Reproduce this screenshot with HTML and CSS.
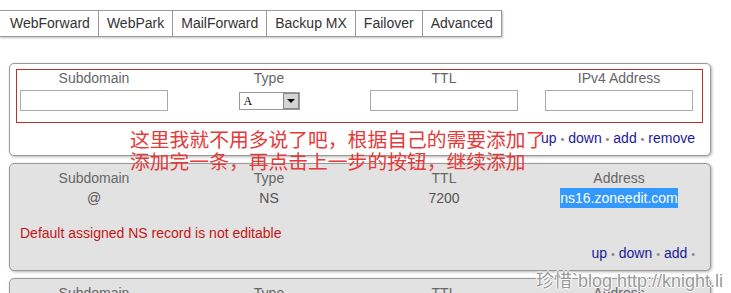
FILE: index.html
```html
<!DOCTYPE html>
<html>
<head>
<meta charset="utf-8">
<link rel="stylesheet" href="styles.css">
</head>
<body>
<div class="tabs">
  <div class="tab">WebForward</div>
  <div class="tab">WebPark</div>
  <div class="tab">MailForward</div>
  <div class="tab">Backup MX</div>
  <div class="tab">Failover</div>
  <div class="tab">Advanced</div>
</div>

<div class="panel edit">
  <div class="cols">
    <div class="col">
      <div class="label">Subdomain</div>
      <div class="field"></div>
    </div>
    <div class="col">
      <div class="label">Type</div>
      <div class="select"><span class="opt">A</span><span class="arrow"></span></div>
    </div>
    <div class="col">
      <div class="label">TTL</div>
      <div class="field"></div>
    </div>
    <div class="col">
      <div class="label">IPv4 Address</div>
      <div class="field"></div>
    </div>
  </div>
  <div class="links">
    <a>up</a> <span class="dot">&bull;</span> <a>down</a> <span class="dot">&bull;</span> <a>add</a> <span class="dot">&bull;</span> <a>remove</a>
  </div>
  <div class="mark-box"></div>
  <div class="mark-text">这里我就不用多说了吧，根据自己的需要添加了<br>添加完一条，再点击上一步的按钮，继续添加</div>
</div>

<div class="panel record">
  <div class="cols">
    <div class="col"><div class="label">Subdomain</div><div class="value">@</div></div>
    <div class="col"><div class="label">Type</div><div class="value">NS</div></div>
    <div class="col"><div class="label">TTL</div><div class="value">7200</div></div>
    <div class="col"><div class="label">Address</div><div class="value"><span class="sel">ns16.zoneedit.com</span></div></div>
  </div>
  <div class="msg">Default assigned NS record is not editable</div>
  <div class="links">
    <a>up</a> <span class="dot">&bull;</span> <a>down</a> <span class="dot">&bull;</span> <a>add</a> <span class="dot">&bull;</span>
  </div>
</div>

<div class="panel record">
  <div class="cols">
    <div class="col"><div class="label">Subdomain</div></div>
    <div class="col"><div class="label">Type</div></div>
    <div class="col"><div class="label">TTL</div></div>
    <div class="col"><div class="label">Address</div></div>
  </div>
</div>

<div class="watermark">珍惜`blog http://knight.li</div>
</body>
</html>
```

FILE: styles.css
```css
* {
  margin: 0px;
  padding: 0px;
  box-sizing: border-box;
}
body {
  width: 731px;
  height: 293px;
  overflow: hidden;
  background: white;
  font-family: "Liberation Sans", Arial, sans-serif;
  font-size: 14px;
  color: #555;
  position: relative;
}
.tabs {
  display: inline-flex;
  height: 27px;
  margin: 10px 0 0 -1px;
  border: 1px solid #999;
  border-left: none;
  box-shadow: 1px 1px 2px rgba(0,0,0,0.25);
  vertical-align: top;
}
.tab {
  padding: 0 8px;
  line-height: 25px;
  color: #333;
  white-space: nowrap;
  border-left: 1px solid #999;
}
.tab:first-child {
  padding-left: 10px;
}
.panel {
  position: relative;
  width: 702px;
  margin: 0 0 0 9px;
  border: 1px solid #999;
  border-radius: 5px;
  box-shadow: 1px 1px 3px rgba(0,0,0,0.3);
  padding: 4px 7px 9px 0;
}
.edit {
  margin-top: 26px;
  background: white;
}
.record {
  margin-top: 7px;
  background: #e2e2e2;
}
.cols {
  display: grid;
  grid-template-columns: repeat(4, 168px);
  column-gap: 7px;
}
.col {
  display: flex;
  flex-direction: column;
  align-items: center;
}
.label {
  line-height: 20px;
  color: #666;
}
.value {
  line-height: 20px;
  color: #555;
}
.sel {
  background: #3399ff;
  color: white;
  padding: 2px 0;
}
.field {
  margin-top: 2px;
  width: 148px;
  height: 21px;
  border: 1px solid #aaa;
  background: white;
}
.select {
  margin-top: 4px;
  width: 61px;
  height: 18px;
  border: 1px solid #999;
  background: white;
  display: flex;
  align-items: center;
  justify-content: space-between;
}
.opt {
  font-family: "Liberation Serif", serif;
  font-size: 12px;
  padding-left: 4px;
  color: #000;
}
.arrow {
  width: 16px;
  height: 16px;
  background: #d4d4d4;
  border: 1px solid #888;
  display: flex;
  align-items: center;
  justify-content: center;
}
.arrow::after {
  content: "";
  border-left: 4px solid transparent;
  border-right: 4px solid transparent;
  border-top: 4px solid #000;
}
.links {
  margin-top: 19px;
  padding-right: 8px;
  text-align: right;
  line-height: 16px;
  height: 16px;
  color: #1a1a99;
}
.record .links {
  margin-top: 4px;
}
.links .dot {
  color: #888;
  font-size: 11px;
  line-height: 1;
}
.msg {
  margin-top: 17px;
  padding-left: 10px;
  line-height: 16px;
  color: #c41616;
}
.mark-box {
  position: absolute;
  left: 6px;
  top: 5px;
  width: 687px;
  height: 54px;
  border: 1px solid #b83030;
}
.mark-text {
  position: absolute;
  left: 120px;
  top: 64px;
  z-index: 2;
  font-family: "Noto Sans CJK SC", sans-serif;
  font-size: 19.8px;
  line-height: 22px;
  color: #e43a3a;
  white-space: nowrap;
}
.watermark {
  position: absolute;
  right: 8px;
  bottom: 1px;
  z-index: 3;
  font-family: "Liberation Sans", "Noto Sans CJK SC", sans-serif;
  font-size: 18px;
  line-height: 22px;
  color: #9a9a9a;
  text-shadow: 1px 0 0 #fff, -1px 0 0 #fff, 0 1px 0 #fff, 0 -1px 0 #fff;
}
```
